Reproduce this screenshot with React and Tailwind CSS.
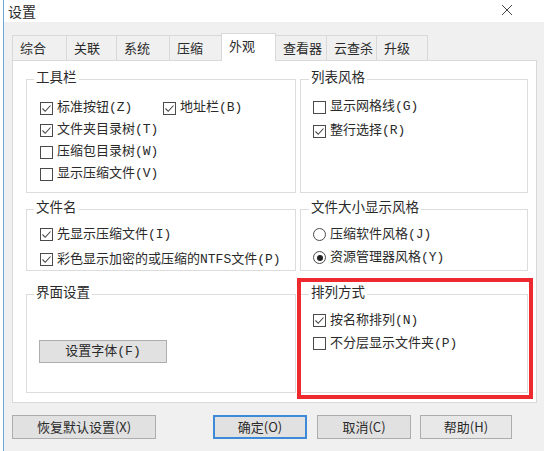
import React from 'react';

const MONO = "font-['Liberation_Mono','Noto_Sans_CJK_SC',monospace]";
const SANS = "font-['Noto_Sans_CJK_SC',sans-serif]";

function Check({ checked }) {
  return (
    <span className="flex h-[13px] w-[13px] shrink-0 items-center justify-center border border-[#4a4a4a] bg-white">
      {checked && (
        <svg width="11" height="11" viewBox="0 0 11 11">
          <polyline points="1.5,5.5 4.2,8.3 9.5,2.5" fill="none" stroke="#444" strokeWidth="1.1" />
        </svg>
      )}
    </span>
  );
}

function Radio({ checked }) {
  return (
    <span className="flex h-[13px] w-[13px] shrink-0 items-center justify-center rounded-full border border-[#4a4a4a] bg-white">
      {checked && <span className="h-[6px] w-[6px] rounded-full bg-[#222]" />}
    </span>
  );
}

function Option({ label, checked, radio, className = '' }) {
  return (
    <div className={`flex items-center gap-[4px] ${className}`}>
      {radio ? <Radio checked={checked} /> : <Check checked={checked} />}
      <span className="text-[13px] leading-[16px] text-[#2a2a2a] whitespace-nowrap">{label}</span>
    </div>
  );
}

function Group({ title, className = '', titleLeft = 'left-[7px]', children }) {
  return (
    <div className={`relative border border-[#dcdcdc] ${className}`}>
      <span className={`absolute -top-[9px] ${titleLeft} bg-white px-[2px] text-[13.5px] leading-[16px] text-[#2a2a2a]`}>
        {title}
      </span>
      {children}
    </div>
  );
}

export default function App() {
  const tabs = [
    { name: '综合', w: 'w-[55px]' },
    { name: '关联', w: 'w-[51px]' },
    { name: '系统', w: 'w-[54px]' },
    { name: '压缩', w: 'w-[53px]' },
    { name: '外观', w: 'w-[55px]', active: true },
    { name: '查看器', w: 'w-[52px]' },
    { name: '云查杀', w: 'w-[51px]' },
    { name: '升级', w: 'w-[52px]' },
  ];

  return (
    <div className={`relative h-[451px] w-[544px] overflow-hidden bg-white pl-[3px] ${SANS}`}>
      <div className="flex h-full flex-col border-l border-[#6ea8d8]">
        {/* Title bar */}
        <div className="flex h-[22px] items-center justify-between bg-white pl-[4px] pr-[31px]">
          <span className="text-[14px] leading-[18px] text-[#2a2a2a]">设置</span>
          <svg width="12" height="12" viewBox="0 0 12 12" className="-mt-[3px]">
            <path d="M1 1 L11 11 M11 1 L1 11" stroke="#444" strokeWidth="1" />
          </svg>
        </div>

        <div className="flex-1 bg-[#f0f0f0] pl-[8px] pt-[11px]">
          {/* Tabs */}
          <div className="relative z-10 -mb-px flex items-end">
            {tabs.map((t) =>
              t.active ? (
                <div
                  key={t.name}
                  className={`${t.w} -ml-px flex h-[28px] items-start border border-b-0 border-[#d9d9d9] bg-white pl-[7px] pt-[3px] text-[13px] leading-[18px] text-[#2a2a2a]`}
                >
                  {t.name}
                </div>
              ) : (
                <div
                  key={t.name}
                  className={`${t.w} -ml-px mb-px flex h-[25px] items-center border border-b-0 border-[#d9d9d9] bg-[#f0f0f0] pl-[7px] text-[13px] leading-[18px] text-[#2a2a2a] first:ml-0`}
                >
                  {t.name}
                </div>
              )
            )}
          </div>

          {/* Panel */}
          <div className={`h-[343px] w-[525px] border border-[#d9d9d9] bg-white pl-[13px] pt-[18px] ${MONO}`}>
            {/* Row 1 */}
            <div className="flex gap-[4px]">
              <Group title="工具栏" className="h-[114px] w-[270px]">
                <div className="flex flex-col pl-[13px] pt-[17px]">
                  <div className="flex h-[22px] items-center">
                    <Option label="标准按钮(Z)" checked className="w-[123px]" />
                    <Option label="地址栏(B)" checked />
                  </div>
                  <Option label="文件夹目录树(T)" checked className="h-[22px]" />
                  <Option label="压缩包目录树(W)" className="h-[22px]" />
                  <Option label="显示压缩文件(V)" className="h-[22px]" />
                </div>
              </Group>
              <Group title="列表风格" titleLeft="left-[8px]" className="h-[114px] w-[228px]">
                <div className="flex flex-col pl-[12px] pt-[15px]">
                  <Option label="显示网格线(G)" className="h-[24px]" />
                  <Option label="整行选择(R)" checked className="h-[24px]" />
                </div>
              </Group>
            </div>

            {/* Row 2 */}
            <div className="mt-[16px] flex gap-[4px]">
              <Group title="文件名" className="h-[62px] w-[270px]">
                <div className="flex flex-col pl-[13px] pt-[12px]">
                  <Option label="先显示压缩文件(I)" checked className="h-[25px]" />
                  <Option label="彩色显示加密的或压缩的NTFS文件(P)" checked className="h-[25px]" />
                </div>
              </Group>
              <Group title="文件大小显示风格" titleLeft="left-[8px]" className="h-[62px] w-[228px]">
                <div className="flex flex-col pl-[12px] pt-[13px]">
                  <Option label="压缩软件风格(J)" radio className="h-[23px]" />
                  <Option label="资源管理器风格(Y)" radio checked className="h-[23px]" />
                </div>
              </Group>
            </div>

            {/* Row 3 */}
            <div className="mt-[23px] flex gap-[4px]">
              <Group title="界面设置" className="h-[99px] w-[270px]">
                <div className="pl-[12px] pt-[45px]">
                  <div className="flex h-[23px] w-[128px] items-center justify-center border border-[#adadad] bg-[#e1e1e1] text-[13px] leading-[16px] text-[#2a2a2a]">
                    设置字体(F)
                  </div>
                </div>
              </Group>
              <Group title="排列方式" titleLeft="left-[8px]" className="h-[99px] w-[228px]">
                <div className="flex flex-col pl-[12px] pt-[14px]">
                  <Option label="按名称排列(N)" checked className="h-[23px]" />
                  <Option label="不分层显示文件夹(P)" className="h-[23px]" />
                </div>
              </Group>
            </div>
          </div>

          {/* Bottom buttons */}
          <div className="mt-[12px] flex items-center text-[13px] leading-[16px] text-[#2a2a2a]">
            <div className="flex h-[24px] w-[144px] items-center justify-center border border-[#adadad] bg-[#e1e1e1]">
              恢复默认设置(X)
            </div>
            <div className="ml-[57px] flex h-[24px] w-[94px] items-center justify-center border-2 border-[#3c8ad8] bg-[#e1e1e1]">
              确定(O)
            </div>
            <div className="ml-[10px] flex h-[24px] w-[94px] items-center justify-center border border-[#adadad] bg-[#e1e1e1]">
              取消(C)
            </div>
            <div className="ml-[9px] flex h-[24px] w-[92px] items-center justify-center border border-[#adadad] bg-[#e8e8e8]">
              帮助(H)
            </div>
          </div>
        </div>
      </div>

      {/* Red highlight annotation */}
      <div className="pointer-events-none absolute left-[297px] top-[278px] h-[121px] w-[236px] border-[4px] border-[#ee2a2f]" />
    </div>
  );
}
